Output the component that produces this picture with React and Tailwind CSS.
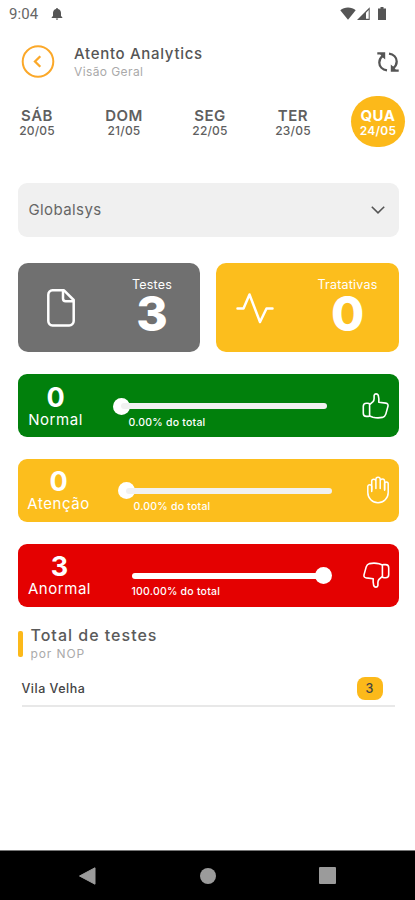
import React from "react";

const days = [
  { name: "SÁB", date: "20/05", pos: "ml-[5px] w-16" },
  { name: "DOM", date: "21/05", pos: "ml-[23px] w-16" },
  { name: "SEG", date: "22/05", pos: "ml-[22px] w-16" },
  { name: "TER", date: "23/05", pos: "ml-[19px] w-16" },
  { name: "QUA", date: "24/05", pos: "ml-[26px] w-[54px]", active: true },
];

const levels = [
  {
    label: "Normal",
    count: 0,
    percent: 0,
    bg: "bg-[#01800c]",
    labelWidth: "w-[56px]",
    slider: "ml-[37px] w-[206px]",
    caption: "ml-2",
    icon: <ThumbUpIcon className="size-7" />,
  },
  {
    label: "Atenção",
    count: 0,
    percent: 0,
    bg: "bg-[#fcbe1d]",
    labelWidth: "w-[62px]",
    slider: "ml-9 w-[206px]",
    caption: "ml-2",
    icon: <HandIcon className="-mr-0.5 size-7" />,
  },
  {
    label: "Anormal",
    count: 3,
    percent: 100,
    bg: "bg-[#e40101]",
    labelWidth: "w-[64px]",
    slider: "ml-10 w-[192px]",
    caption: "ml-0",
    icon: <ThumbUpIcon className="size-7 rotate-180" />,
  },
];

function ThumbUpIcon({ className }) {
  return (
    <svg viewBox="0 0 28 28" className={className} fill="none" stroke="currentColor" strokeWidth="1.6" strokeLinejoin="round" strokeLinecap="round">
      <path d="M7.600 12.600 11 9.600c.8-.9 1.100-1.900 1.100-3.200V3.600c.2-2.200 3.300-2.400 4.200-.2.6 2.300.7 4.500.5 6.900l7 .8c1.800.3 2.500 1.400 2.200 3l-2.200 8c-.5 1.700-1.600 2.800-3.400 3.300-3.300.7-6.500.6-9.500-.2l-3.300-1.200Z" />
      <path d="M7.600 12c-.4-.6-1-.8-1.700-.8H4.400c-1.900 0-3.100 1.200-3.100 3v7c0 1.900 1.200 3.200 3.100 3.200h1.900c.6 0 1-.1 1.300-.5" />
    </svg>
  );
}

function HandIcon({ className }) {
  return (
    <svg viewBox="0 0 28 28" className={className} fill="none" stroke="currentColor" strokeWidth="1.500" strokeLinejoin="round" strokeLinecap="round">
      <path d="M7.700 15.500v-5.300a2 2 0 0 0-3.900 0v6.300a10.200 10.200 0 0 0 20.400 0V7.700a1.800 1.800 0 0 0-3.600 0v6.500" />
      <path d="M7.700 14V5.300a2.100 2.100 0 0 1 4.200 0V12.500M11.900 12V3.400a2.150 2.150 0 0 1 4.300 0V12.500M16.200 5.300a2.200 2.200 0 0 1 4.400 0v8.200" />
    </svg>
  );
}

function DocumentIcon() {
  return (
    <svg viewBox="0 0 28 38" className="h-[38px] w-7" fill="none" stroke="currentColor" strokeWidth="2.500" strokeLinejoin="round">
      <path d="M5.500 1.300h11.500L26.700 11v21a4.500 4.500 0 0 1-4.500 4.500H5.500A4.500 4.500 0 0 1 1.300 32V5.800a4.500 4.500 0 0 1 4.200-4.500Z" />
      <path d="M16 1.500v8c0 1.700.9 2.700 2.600 2.700h7.600" />
    </svg>
  );
}

function PulseIcon() {
  return (
    <svg viewBox="0 0 38 32" className="h-8 w-[38px]" fill="none" stroke="currentColor" strokeWidth="2.500" strokeLinejoin="round" strokeLinecap="round">
      <path d="M1.500 16.500h6L13.500 2.500 24 30l6.500-13.500h6" />
    </svg>
  );
}

function SyncIcon() {
  return (
    <svg viewBox="0 0 22 20" className="h-5 w-[22px]" fill="none" stroke="currentColor" strokeWidth="2.300">
      <path d="M10 18.400C5.500 17.700 2.300 14.500 2.300 10.400c0-2.600 1.300-5 3.600-6.800M12 1.600c4.500.6 7.700 3.900 7.700 8 0 2.600-1.300 5-3.600 6.800" />
      <path d="M.3.200h7.900v7.200L5.600 5.200 3.200 2.600H.3ZM21.700 19.800h-7.900v-7.200l2.600 2.200 2.400 2.600h2.900Z" fill="currentColor" stroke="none" />
    </svg>
  );
}

function StatusBar() {
  return (
    <div className="flex h-7 items-center pl-[9px] pr-[29px] text-[#555]">
      <span className="w-[42px] font-['Roboto',sans-serif] text-[15px] leading-7 tracking-[0.1px] text-[#666]">9:04</span>
      <svg viewBox="0 0 12 12" className="size-3" fill="currentColor">
        <path d="M6 0a1 1 0 0 1 1 1c2 .6 3 2.200 3 4v3l1.300 1.300v.7H.7v-.7L2 8V5c0-1.800 1-3.400 3-4a1 1 0 0 1 1-1ZM4.800 10.600h2.400a1.200 1.200 0 0 1-2.400 0Z" />
      </svg>
      <div className="-mt-0.5 ml-auto flex items-center">
        <svg viewBox="0 0 16 13" className="h-[13px] w-4" fill="currentColor">
          <path d="M8 12.700.3 3.200C4.500-.3 11.500-.3 15.700 3.200Z" />
        </svg>
        <svg viewBox="0 0 13 13" className="ml-px h-[13px] w-[13px]" fill="currentColor">
          <path d="M0 13 12.700.3V13Zm9-1.200h2.700V3L9 5.700Z" fillRule="evenodd" />
        </svg>
        <svg viewBox="0 0 8 13" className="ml-2 h-[13px] w-2" fill="currentColor">
          <path d="M2.500 0h3v1.500H8V13H0V1.500h2.500Z" />
        </svg>
      </div>
    </div>
  );
}

function Header() {
  return (
    <header className="mt-[17px] flex h-[34px] items-center pl-[21px] pr-4 text-[#555]">
      <svg viewBox="0 0 34 34" className="h-[34px] w-[34px] text-[#fba829]" fill="none" stroke="currentColor" strokeWidth="2">
        <circle cx="17" cy="16.500" r="15.300" />
        <path d="m19.300 11.300-5.300 5.200 5.300 5.200" strokeWidth="2.300" />
      </svg>
      <div className="ml-[19px] whitespace-nowrap pt-px">
        <h1 className="text-[15px] font-medium leading-[18px] tracking-[0.7px]">Atento Analytics</h1>
        <p className="text-xs leading-[18px] tracking-[0.4px] text-[#aaa]">Visão Geral</p>
      </div>
      <div className="ml-auto">
        <SyncIcon />
      </div>
    </header>
  );
}

function DayPicker() {
  return (
    <div className="mt-[17px] flex h-[51px]">
      {days.map((day) => (
        <div
          key={day.name}
          className={`${day.pos} flex shrink-0 flex-col items-center whitespace-nowrap rounded-full pt-3 ${
            day.active ? "bg-[#fcb91a] text-white" : "text-[#5f5f5f]"
          }`}
        >
          <span className={`text-[15px] leading-[15px] tracking-[0.5px] ${day.active ? "font-bold" : "font-semibold"}`}>{day.name}</span>
          <span className={`text-xs leading-[15px] tracking-[0.2px] ${day.active ? "font-semibold" : "font-medium"}`}>{day.date}</span>
        </div>
      ))}
    </div>
  );
}

function SummaryCard({ label, value, icon, className }) {
  return (
    <div className={`flex h-[89px] items-center rounded-[10px] text-white ${className}`}>
      {icon}
      <div className="ml-auto flex w-[68px] flex-col items-center">
        <span className="text-[12.500px] leading-[15px] tracking-[0.2px]">{label}</span>
        <span className="-mt-0.5 text-5xl font-extrabold leading-[48px]">{value}</span>
      </div>
    </div>
  );
}

function LevelCard({ level }) {
  const atEnd = level.percent === 100;
  return (
    <div className={`flex h-[63px] items-center rounded-[9px] pl-[10px] pr-[9px] text-white ${level.bg}`}>
      <div className={`${level.labelWidth} flex flex-col items-center whitespace-nowrap pt-1.5`}>
        <span className="text-[27px] font-bold leading-[22px]">{level.count}</span>
        <span className="text-[15px] leading-[22px] tracking-[0.55px]">{level.label}</span>
      </div>
      <div className={level.slider}>
        <div className={`mt-4 flex h-[17px] items-center ${atEnd ? "justify-end" : ""}`}>
          <div className={`h-1.5 w-full rounded-full ${atEnd ? "bg-white" : "bg-[#f1f1f1]"}`} />
          <div className={`size-[17px] shrink-0 rounded-full bg-white ${atEnd ? "-ml-[9px] -mr-2" : "order-first -ml-2 -mr-[9px]"}`} />
        </div>
        <p className={`${level.caption} whitespace-nowrap text-[10.500px] font-medium leading-[15px] tracking-[0.22px]`}>
          {level.percent.toFixed(2)}% do total
        </p>
      </div>
      <div className="ml-auto">{level.icon}</div>
    </div>
  );
}

function NavBar() {
  return (
    <nav className="mt-auto flex h-[50px] items-center border-t border-[#777] bg-black pl-[79px] pr-[79px] text-[#9b9b9b]">
      <svg viewBox="0 0 17 18" className="h-[18px] w-[17px]" fill="currentColor">
        <path d="M16 .8v16.400L.5 9Z" stroke="currentColor" strokeLinejoin="round" />
      </svg>
      <div className="mx-auto size-4 rounded-full bg-[#9b9b9b]" />
      <div className="size-[17px] rounded-[1px] bg-[#9b9b9b]" />
    </nav>
  );
}

const App = () => {
  return (
    <div className="flex h-[900px] w-[415px] flex-col overflow-hidden bg-white font-['Inter',sans-serif]">
      <StatusBar />
      <Header />
      <DayPicker />

      <main className="pl-[17.500px] pr-[16.500px]">
        <button className="mt-9 flex h-[54px] w-full items-center justify-between rounded-[9px] bg-[#f0f0f0] pl-[11px] pr-[14px] text-[15px] tracking-[0.4px] text-[#666]">
          Globalsys
          <svg viewBox="0 0 14 8" className="h-2 w-3.5" fill="none" stroke="#555" strokeWidth="1.600">
            <path d="m.8.8 6.200 6 6.200-6" />
          </svg>
        </button>

        <div className="mt-[26px] grid grid-cols-2 gap-4">
          <SummaryCard label="Testes" value={3} icon={<DocumentIcon />} className="bg-[#707070] pl-[29px] pr-[14px]" />
          <SummaryCard label="Tratativas" value={0} icon={<PulseIcon />} className="bg-[#fcbe1d] pl-5 pr-[17px]" />
        </div>

        <div className="mt-[22px] flex flex-col gap-[21.750px]">
          {levels.map((level) => (
            <LevelCard key={level.label} level={level} />
          ))}
        </div>

        <div className="mt-[18px] flex items-center">
          <div className="h-[26px] w-[5px] rounded-[2px] bg-[#fcb91a]" />
          <div className="ml-2 whitespace-nowrap">
            <h2 className="text-base font-medium leading-5 tracking-[1px] text-[#5a5a5a]">Total de testes</h2>
            <p className="text-xs leading-[18px] tracking-[0.9px] text-[#aaa]">por NOP</p>
          </div>
        </div>

        <div className="ml-1 mr-1 mt-3.5 flex h-[30px] items-start justify-between border-b-2 border-[#e8e8e8] pr-[12px] text-[12.500px] text-[#444]">
          <span className="font-medium leading-6 tracking-[0.5px]">Vila Velha</span>
          <span className="h-[23px] w-[26px] rounded-lg bg-[#fcb91a] text-center font-medium leading-6">3</span>
        </div>
      </main>

      <NavBar />
    </div>
  );
};

export default App;
